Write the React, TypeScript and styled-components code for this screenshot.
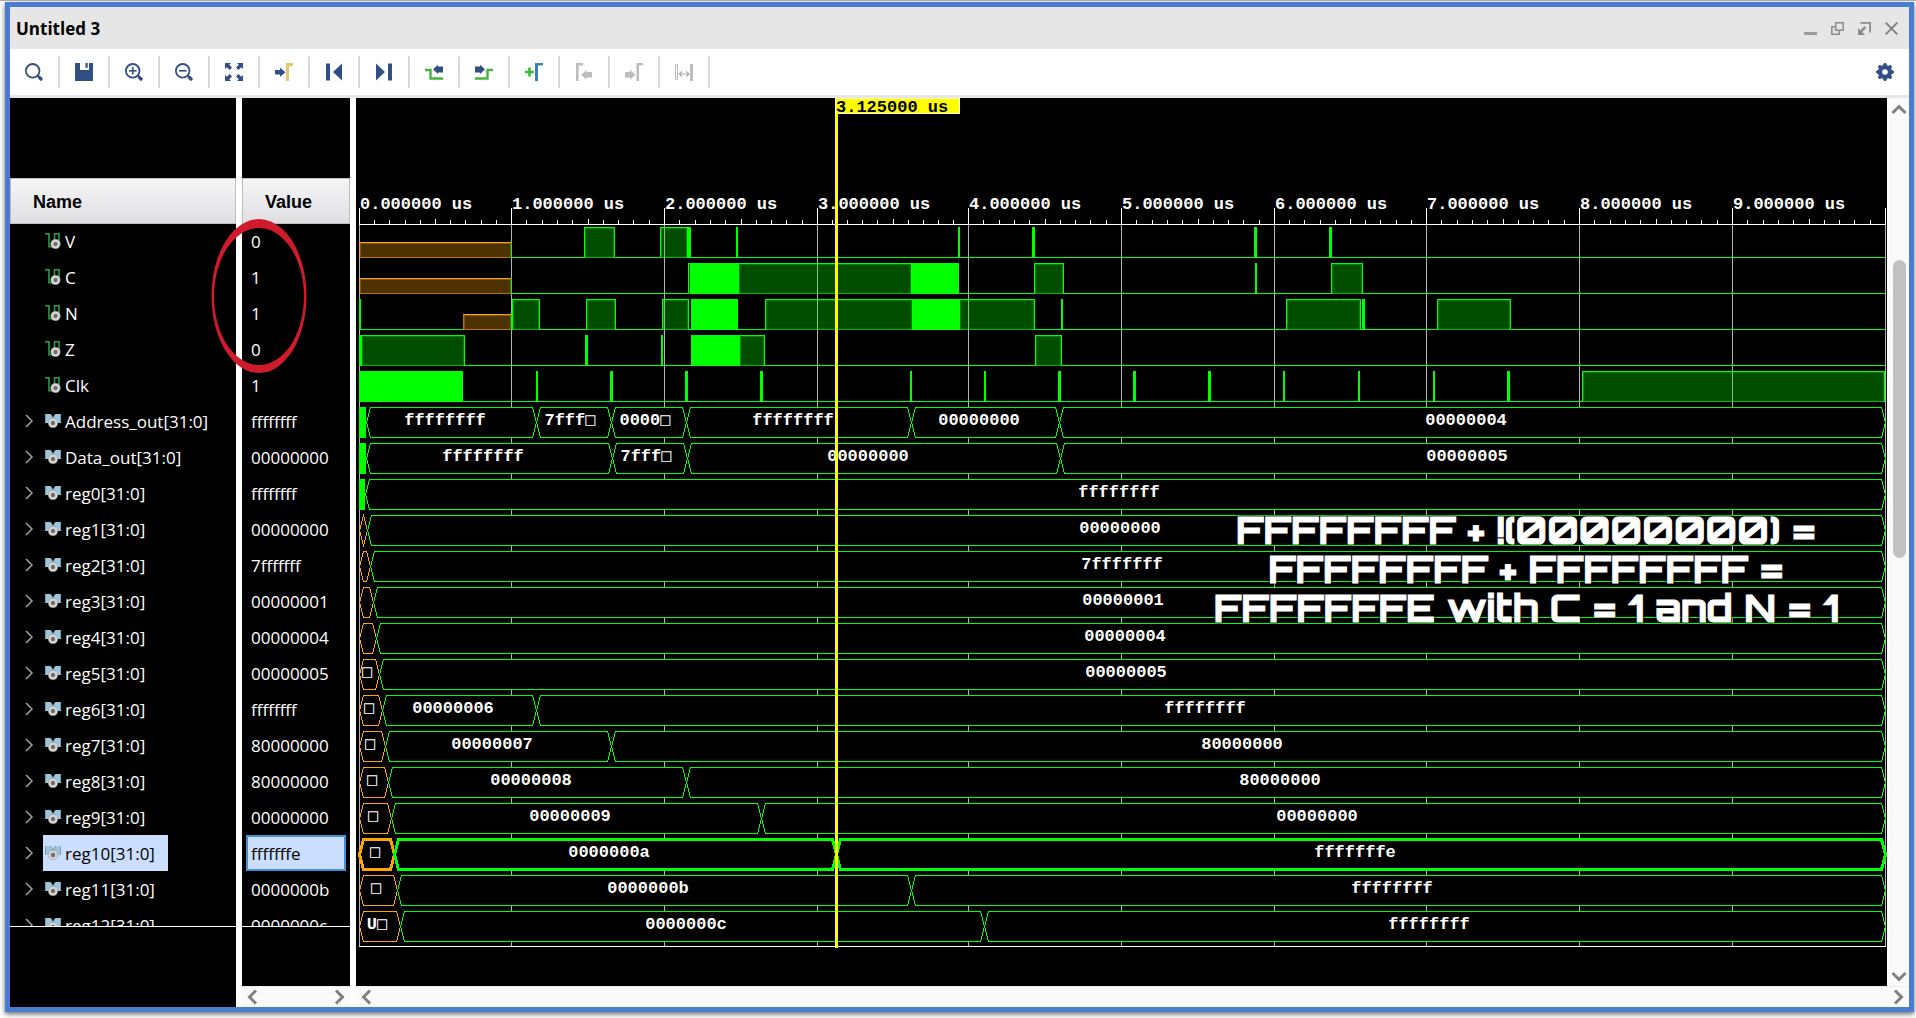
import React, { createContext, useContext, useLayoutEffect, useRef, useState } from "react";
import styled, { createGlobalStyle } from "styled-components";

const NAVY = "#324f85";
const GREEN = "#00ff00";
const ORANGE = "#ffa500";
const GRID = "#b4b4b4";
const UI_FONT = '"Segoe UI", "Open Sans", "Noto Sans", sans-serif';
const MONO_FONT = '"Courier New", "Liberation Mono", monospace';

const GlobalStyle = createGlobalStyle`
  * { box-sizing: border-box; }
  body { margin: 0; background: #fff; font-family: ${UI_FONT}; }
  button { font: inherit; border: 0; padding: 0; background: none; color: inherit; cursor: pointer; }
  svg { display: block; }
`;

/* ---------- window frame ---------- */

const Page = styled.div`
  height: 100vh;
  min-height: 640px;
  padding: 1px 2px 6px 5px;
  border-top: 1px solid #a9a9a9;
  overflow: hidden;
`;

const Frame = styled.main`
  height: 100%;
  display: flex;
  flex-direction: column;
  border: 5px solid #4a7dcf;
  box-shadow: 0 2px 5px rgba(0, 0, 0, 0.6);
  background: #fff;
`;

const TitleBar = styled.header`
  flex: none;
  height: 42px;
  display: flex;
  align-items: center;
  justify-content: space-between;
  padding: 0 4px 0 6px;
  background: #e6e6e6;
`;

const Title = styled.h1`
  margin: 0;
  font-size: 17px;
  font-weight: 700;
  color: #000;
`;

const WindowButtons = styled.div`
  display: flex;
`;

const WindowButton = styled.button`
  width: 27px;
  height: 27px;
  display: grid;
  place-items: center;
`;

const Toolbar = styled.div`
  flex: none;
  height: 49px;
  display: flex;
  align-items: center;
  border-bottom: 3px solid #e6e6e6;
  background: #fff;
`;

const ToolButton = styled.button`
  width: 50px;
  height: 32px;
  display: grid;
  place-items: center;
  border-right: 2px solid #d9d9d9;
`;

const SettingsButton = styled.button`
  width: 48px;
  height: 32px;
  margin-left: auto;
  display: grid;
  place-items: center;
`;

/* ---------- panes ---------- */

const Panes = styled.div`
  position: relative;
  flex: 1;
  min-height: 0;
  display: grid;
  grid-template-columns: 226px 108px minmax(0, 1fr);
  column-gap: 6px;
`;

const Pane = styled.section`
  display: flex;
  flex-direction: column;
  min-width: 0;
  min-height: 0;
  background: #000;
`;

const Spacer = styled.div`
  flex: none;
  height: 80px;
`;

const ColumnHeader = styled.h2`
  flex: none;
  height: 46px;
  margin: 0;
  padding-left: 22px;
  border: 1px solid #bdbdbd;
  background: linear-gradient(#f5f5f6, #dfdfe3);
  font: 700 18px/46px Arial, "Liberation Sans", sans-serif;
  color: #000;
`;

const List = styled.ul`
  flex: 1;
  min-height: 0;
  margin: -1px 0 0;
  padding: 0;
  overflow: hidden;
  list-style: none;
`;

const NameItem = styled.li`
  height: 36px;
  display: flex;
  align-items: center;
  padding-left: 13px;
`;

const Expander = styled.button<{ $hidden: boolean }>`
  width: 12px;
  height: 20px;
  margin-right: 8px;
  visibility: ${(p) => (p.$hidden ? "hidden" : "visible")};
`;

const NameLabel = styled.span<{ $selected: boolean }>`
  height: 36px;
  display: flex;
  align-items: center;
  gap: 4px;
  padding: 2px 13px 0 2px;
  font-size: 17px;
  line-height: 34px;
  white-space: nowrap;
  color: ${(p) => (p.$selected ? "#000" : "#fff")};
  background: ${(p) => (p.$selected ? "#ccdeff" : "transparent")};

  svg {
    margin-bottom: 2px;
  }
`;

const ValueItem = styled.li<{ $selected: boolean }>`
  height: 36px;
  margin: 0 4px;
  padding-left: 3px;
  border: 2px solid ${(p) => (p.$selected ? "#3f91d4" : "transparent")};
  font-size: 17px;
  line-height: 34px;
  color: ${(p) => (p.$selected ? "#000" : "#fff")};
  background: ${(p) => (p.$selected ? "#ccdeff" : "transparent")};
`;

const ListFooter = styled.div<{ $height: number }>`
  flex: none;
  height: ${(p) => p.$height}px;
  border-top: 1px solid #fff;
`;

const HScroll = styled.div`
  flex: none;
  height: 21px;
  display: flex;
  align-items: center;
  justify-content: space-between;
  padding: 0 2px;
  border-top: 1px solid #ececec;
  background: #fafafa;
`;

const WaveRow = styled.div`
  flex: 1;
  min-height: 0;
  display: flex;
`;

const Plot = styled.div`
  position: relative;
  flex: 1;
  min-width: 0;
  overflow: hidden;
`;

const VScroll = styled.div`
  flex: none;
  width: 22px;
  display: flex;
  flex-direction: column;
  align-items: center;
  padding: 3px 0 1px;
  border-left: 2px solid #fff;
  background: #fafafa;
`;

const Track = styled.div`
  flex: 1;
  display: grid;
  grid-template-rows: 141fr 298fr 409fr;
`;

const Thumb = styled.div`
  grid-row: 2;
  width: 13px;
  border-radius: 7px;
  background: #c1c1c1;
`;

const ScrollButton = styled.button`
  width: 18px;
  height: 18px;
  display: grid;
  place-items: center;
`;

/* ---------- overlays ---------- */

const CursorLine = styled.div`
  position: absolute;
  top: 0;
  width: 3px;
  height: 850px;
  background: #ff0;
`;

const CursorTag = styled.div`
  position: absolute;
  top: 0;
  width: 125px;
  height: 16px;
  border: 1px solid #ffffc0;
  background: #ff0;
  font: 700 17px/18px ${MONO_FONT};
  white-space: nowrap;
  color: #000;
`;

const Annotation = styled.p`
  position: absolute;
  top: 412px;
  margin: 0;
  transform: translateX(-50%);
  font: 700 38px/39px "Orbitron", "DejaVu Sans", sans-serif;
  text-align: center;
  white-space: nowrap;
  color: #fff;
  -webkit-text-stroke: 1px #fff;
  text-shadow: 0 0 2px #000, 0 0 3px #000, 0 0 3px #000;
`;

const RedCircle = styled.svg`
  position: absolute;
  left: 201px;
  top: 121px;
  pointer-events: none;
`;

/* ---------- icons ---------- */

const Icon = ({ size = 18, children }: { size?: number; children: React.ReactNode }) => (
  <svg width={size} height={size} viewBox={`0 0 ${size} ${size}`} fill="none" aria-hidden="true">
    {children}
  </svg>
);

const Lens = ({ sign }: { sign?: "plus" | "minus" }) => (
  <Icon>
    <circle cx="7.7" cy="7.8" r="6.8" stroke={NAVY} strokeWidth="1.8" />
    <path d="M12.5 12.5l1.5 1.5" stroke={NAVY} strokeWidth="2" />
    <path d="M14.6 14.6l1.4 1.4" stroke={NAVY} strokeWidth="3.4" strokeLinecap="round" />
    {sign && <path d="M4 7.8h7.6" stroke={NAVY} strokeWidth="1.6" />}
    {sign === "plus" && <path d="M7.8 4v7.6" stroke={NAVY} strokeWidth="1.6" />}
  </Icon>
);

const tools: { label: string; icon: React.ReactNode }[] = [
  { label: "Find", icon: <Lens /> },
  { label: "Save", icon: <Icon><path d="M0 0h5v7h9V0h4v18H0z" fill={NAVY} /><path d="M10.5 0h2.2v4.8h-2.2z" fill={NAVY} /></Icon> },
  { label: "Zoom in", icon: <Lens sign="plus" /> },
  { label: "Zoom out", icon: <Lens sign="minus" /> },
  {
    label: "Zoom fit",
    icon: (
      <Icon>
        <path d="M0 0h6L4.200 1.800 7 4.600 4.600 7 1.800 4.200 0 6zM18 0v6l-1.800-1.800L13.400 7 11 4.600l2.800-2.800L12 0zM0 18v-6l1.800 1.800L4.600 11 7 13.400l-2.800 2.800L6 18zM18 18h-6l1.800-1.800-2.800-2.800 2.400-2.400 2.800 2.800L18 12z" fill={NAVY} />
      </Icon>
    ),
  },
  { label: "Go to cursor", icon: <Icon><path d="M0 7h5V4.8L10.5 9.3 5 13.8V11.5H0z" fill={NAVY} /><path d="M11 0h7v3.2h-4V18h-3z" fill="#e3c964" /></Icon> },
  { label: "Go to start", icon: <Icon><path d="M1 .5h4v17H1zM17 .5v17L8 9z" fill={NAVY} /></Icon> },
  { label: "Go to end", icon: <Icon><path d="M13 .5h4v17h-4zM1 .5v17L10 9z" fill={NAVY} /></Icon> },
  { label: "Previous transition", icon: <Icon><path d="M0 7h5.5v8.500H18" stroke="#45b53c" strokeWidth="2.4" /><path d="M8 6.3L13 1.800V3.500h5v6h-5v1.400z" fill={NAVY} /></Icon> },
  { label: "Next transition", icon: <Icon><path d="M0 15.5h12.5V7H18" stroke="#45b53c" strokeWidth="2.4" /><path d="M10 6.3L5 1.800V3.500H0v6h5v1.400z" fill={NAVY} /></Icon> },
  { label: "Add marker", icon: <Icon><path d="M0 9h9M4.5 4.500v9" stroke="#45b53c" strokeWidth="2.6" /><path d="M10 0h8v2.500h-5V18h-3z" fill="#3a80b5" /></Icon> },
  { label: "Previous marker", icon: <Icon><path d="M1 0h7v2.500H3.600V18H1z" fill="#bdbdbd" /><path d="M6 11.700L11.500 7v2H17v5.500h-5.500v2z" fill="#bdbdbd" /></Icon> },
  { label: "Next marker", icon: <Icon><path d="M11.500 0H18v2.500h-4V18h-2.500z" fill="#bdbdbd" /><path d="M10.500 11.700L5 7v2H0v5.500h5v2z" fill="#bdbdbd" /></Icon> },
  {
    label: "Swap cursors",
    icon: (
      <Icon>
        <path d="M.5 1.500h2v15h-2z" stroke="#bdbdbd" />
        <path d="M15 1h3v17h-3z" fill="#bdbdbd" />
        <path d="M5 11h8M7 8.500L4.500 11 7 13.500M11.500 8.500L14 11l-2.500 2.500" stroke="#a9a9a9" strokeWidth="1.2" />
      </Icon>
    ),
  },
];

const Gear = () => (
  <Icon>
    <circle cx="9" cy="9" r="4.9" stroke={NAVY} strokeWidth="4.2" />
    {[0, 45, 90, 135].map((a) => (
      <path key={a} d="M7 1.800L8.200 0h1.600L11 1.800v1.500H7zM7 16.200L8.200 18h1.600l1.200-1.800V14.700H7z" fill={NAVY} transform={`rotate(${a} 9 9)`} />
    ))}
  </Icon>
);

const windowControls: { label: string; icon: React.ReactNode }[] = [
  { label: "Minimize", icon: <path d="M0 10h13v3H0z" fill="#9b9b9b" /> },
  { label: "Restore", icon: <path d="M4.7 8.300V.8h7.500v7.500H4.700zM4 4.700H.8v7.500h7.500V9" stroke="#8c8c8c" strokeWidth="1.5" /> },
  { label: "Pop out", icon: <path d="M2.5 0H13v10.500h-1.800V1.800H2.500zM0 13V6l2.300 2.300L6.500 4l1.800 1.800-4.200 4.200L7 13z" fill="#8c8c8c" /> },
  { label: "Close", icon: <path d="M.7.7l11.600 11.600M12.300.7L.7 12.300" stroke="#7f7f7f" strokeWidth="1.9" /> },
];

const chevrons = {
  up: "M2.500 12L9 5.500l6.500 6.500",
  down: "M2.500 6L9 12.500 15.500 6",
  left: "M12 2.500L5.500 9l6.500 6.500",
  right: "M6 2.500L12.500 9 6 15.500",
};

const ScrollArrow = ({ dir }: { dir: keyof typeof chevrons }) => (
  <ScrollButton type="button" aria-label={`Scroll ${dir}`}>
    <Icon>
      <path d={chevrons[dir]} stroke="#808080" strokeWidth="3" />
    </Icon>
  </ScrollButton>
);

const Badge = ({ x, y }: { x: number; y: number }) => (
  <>
    <circle cx={x} cy={y} r="4.8" fill="#d6d6d6" />
    <circle cx={x} cy={y} r="2.2" fill="#707070" />
    <circle cx={x} cy={y} r="4.8" stroke="#8a8a8a" strokeWidth=".5" />
  </>
);

const ScalarIcon = () => (
  <Icon size={16}>
    <path d="M0 .8h4v13h3M9.500 8V.8h4.500v8" stroke="#2f9a45" strokeWidth="1.6" />
    <Badge x={10.5} y={11} />
  </Icon>
);

const BusIcon = () => (
  <Icon size={16}>
    <path d="M0 1h5.500L8 5l2.500-4H16v9H0z" fill="#9cc6dc" />
    <path d="M.5 1.500v8M15.500 1.500v8M5.500 1L8 5l2.500-4" stroke="#7f9eac" />
    <Badge x={8} y={10} />
  </Icon>
);

/* ---------- waveform data ---------- */

/* Positions are in samples; the full ten microseconds hold SPAN of them. */
const SPAN = 1526;
const CURSOR = 477;
const MAJOR = [0, 152, 305, 458, 609, 762, 915, 1067, 1220, 1373, 1526];

type Level = "high" | "solid" | "unknown";
type Pulse = [number, number, Level];
type BusPart = { to: number; text?: string; kind?: "solid" | "unknown" };
type Signal = { name: string; value: string; pulses?: Pulse[]; bus?: BusPart[]; selected?: boolean };

const reg = (n: number, value: string, first: number, rest: BusPart[], selected = false): Signal => ({
  name: `reg${n}[31:0]`,
  value,
  selected,
  bus: [{ to: first, kind: "unknown", text: n < 5 ? undefined : n < 12 ? "□" : "U□" }, ...rest],
});

const signals: Signal[] = [
  {
    name: "V", value: "0",
    pulses: [
      [0, 153, "unknown"], [225, 256, "high"], [301, 329, "high"], [329, 332, "solid"], [377, 379, "solid"],
      [599, 601, "solid"], [673, 676, "solid"], [895, 898, "solid"], [970, 973, "solid"],
    ],
  },
  {
    name: "C", value: "1",
    pulses: [
      [0, 153, "unknown"], [329, 332, "high"], [332, 379, "solid"], [379, 553, "high"], [553, 600, "solid"],
      [675, 705, "high"], [896, 898, "solid"], [972, 1004, "high"],
    ],
  },
  {
    name: "N", value: "1",
    pulses: [
      [0, 2, "solid"], [104, 153, "unknown"], [153, 181, "high"], [227, 257, "high"], [303, 330, "high"],
      [332, 379, "solid"], [406, 554, "high"], [554, 600, "solid"], [600, 676, "high"], [702, 704, "solid"],
      [927, 1002, "high"], [1003, 1006, "solid"], [1078, 1152, "high"],
    ],
  },
  {
    name: "Z", value: "0",
    pulses: [
      [0, 2, "solid"], [2, 106, "high"], [226, 229, "solid"], [302, 304, "solid"], [332, 380, "solid"],
      [380, 406, "high"], [676, 703, "high"],
    ],
  },
  {
    name: "Clk", value: "1",
    pulses: [
      [0, 104, "solid"], [177, 179, "solid"], [251, 254, "solid"], [326, 329, "solid"], [401, 404, "solid"],
      [551, 553, "solid"], [625, 627, "solid"], [699, 702, "solid"], [774, 777, "solid"], [849, 852, "solid"],
      [924, 926, "solid"], [999, 1001, "solid"], [1074, 1076, "solid"], [1148, 1151, "solid"], [1223, 1526, "high"],
    ],
  },
  {
    name: "Address_out[31:0]", value: "ffffffff",
    bus: [
      { to: 7, kind: "solid" }, { to: 177, text: "ffffffff" }, { to: 252, text: "7fff□" }, { to: 327, text: "0000□" },
      { to: 552, text: "ffffffff" }, { to: 700, text: "00000000" }, { to: SPAN, text: "00000004" },
    ],
  },
  {
    name: "Data_out[31:0]", value: "00000000",
    bus: [
      { to: 7, kind: "solid" }, { to: 253, text: "ffffffff" }, { to: 328, text: "7fff□" },
      { to: 701, text: "00000000" }, { to: SPAN, text: "00000005" },
    ],
  },
  { name: "reg0[31:0]", value: "ffffffff", bus: [{ to: 6, kind: "solid" }, { to: SPAN, text: "ffffffff" }] },
  reg(1, "00000000", 8, [{ to: SPAN, text: "00000000" }]),
  reg(2, "7fffffff", 11, [{ to: SPAN, text: "7fffffff" }]),
  reg(3, "00000001", 14, [{ to: SPAN, text: "00000001" }]),
  reg(4, "00000004", 17, [{ to: SPAN, text: "00000004" }]),
  reg(5, "00000005", 20, [{ to: SPAN, text: "00000005" }]),
  reg(6, "ffffffff", 23, [{ to: 177, text: "00000006" }, { to: SPAN, text: "ffffffff" }]),
  reg(7, "80000000", 26, [{ to: 252, text: "00000007" }, { to: SPAN, text: "80000000" }]),
  reg(8, "80000000", 29, [{ to: 327, text: "00000008" }, { to: SPAN, text: "80000000" }]),
  reg(9, "00000000", 32, [{ to: 402, text: "00000009" }, { to: SPAN, text: "00000000" }]),
  reg(10, "fffffffe", 35, [{ to: 477, text: "0000000a" }, { to: SPAN, text: "fffffffe" }], true),
  reg(11, "0000000b", 38, [{ to: 552, text: "0000000b" }, { to: SPAN, text: "ffffffff" }]),
  reg(12, "0000000c", 41, [{ to: 625, text: "0000000c" }, { to: SPAN, text: "ffffffff" }]),
];

/* ---------- waveform drawing ---------- */

const ScaleContext = createContext<(u: number) => number>((u) => u);

const TOP = 2;
const BOTTOM = 32;
const MID = 17;

const Grid = ({ height }: { height: number }) => {
  const x = useContext(ScaleContext);
  return <>{MAJOR.map((u) => <rect key={u} x={x(u)} y="0" width="1" height={height} fill={GRID} />)}</>;
};

const PulseShape = ({ pulse: [from, to, level] }: { pulse: Pulse }) => {
  const x = useContext(ScaleContext);
  const a = x(from);
  const w = x(to) - a;
  if (level === "solid") return <rect x={a} y={TOP} width={w} height={BOTTOM - TOP + 1} fill={GREEN} />;
  const y = level === "high" ? TOP : MID;
  const color = level === "high" ? GREEN : ORANGE;
  const h = BOTTOM - y + 1;
  return (
    <>
      <rect x={a} y={y} width={w} height={h} fill={color} fillOpacity=".3" />
      <rect x={a + 1.5} y={y + 1.5} width={Math.max(w - 3, 0)} height={h - 2} fill="none" stroke={color} strokeOpacity=".3" />
      <rect x={a} y={y} width={w} height="1" fill={color} />
      <rect x={a} y={y} width="1" height={h} fill={color} fillOpacity={level === "high" ? 1 : 0.6} />
      <rect x={a} y={BOTTOM} width={w} height="1" fill={color} fillOpacity=".4" />
      <rect x={a + w - 1} y={y} width="1" height={h} fill={GREEN} />
    </>
  );
};

const DigitalTrace = ({ pulses }: { pulses: Pulse[] }) => {
  const x = useContext(ScaleContext);
  const lows: [number, number][] = [];
  let at = 0;
  pulses.forEach(([from, to]) => {
    if (from > at) lows.push([at, from]);
    at = to;
  });
  if (at < SPAN) lows.push([at, SPAN]);
  return (
    <>
      {lows.map(([a, b]) => <rect key={a} x={x(a)} y={BOTTOM} width={x(b) - x(a)} height="1" fill={GREEN} />)}
      {pulses.map((p) => <PulseShape key={p[0]} pulse={p} />)}
    </>
  );
};

const BusTrace = ({ parts, bold }: { parts: BusPart[]; bold?: boolean }) => {
  const x = useContext(ScaleContext);
  return (
    <>
      {parts.map((part, i) => {
        const a = x(i === 0 ? 0 : parts[i - 1].to) + 0.5;
        const b = x(part.to) + 0.5;
        if (part.kind === "solid") {
          return <rect key={part.to} x={a - 0.5} y={TOP} width={b - a} height={BOTTOM - TOP + 1} fill={GREEN} />;
        }
        const s = Math.min(4, (b - a) / 2);
        const [t, m, d] = [TOP + 0.5, MID + 0.5, BOTTOM + 0.5];
        const text = part.text ?? "";
        return (
          <g key={part.to}>
            <path
              d={`M${a} ${m}L${a + s} ${t}H${b - s}L${b} ${m}L${b - s} ${d}H${a + s}Z`}
              fill="#000"
              stroke={part.kind === "unknown" ? ORANGE : GREEN}
              strokeWidth={bold ? 3 : 1}
            />
            {text && (
              <text
                x={Math.floor((a + b) / 2 - text.length * 0.6 - 1)}
                y="20"
                textAnchor="middle"
                fill="#fff"
                fontFamily={MONO_FONT}
                fontWeight="700"
                fontSize="17"
              >
                {text.replace("□", "")}
                {text.endsWith("□") && (
                  <tspan fontFamily='"DejaVu Sans Mono", monospace' fontWeight="400">
                    □
                  </tspan>
                )}
              </text>
            )}
          </g>
        );
      })}
    </>
  );
};

const Trace = ({ width, signal }: { width: number; signal: Signal }) => (
  <svg width={width} height="36" shapeRendering="crispEdges" role="img" aria-label={signal.name}>
    <Grid height={36} />
    {signal.pulses && <DigitalTrace pulses={signal.pulses} />}
    {signal.bus && <BusTrace parts={signal.bus} bold={signal.selected} />}
  </svg>
);

const Ruler = ({ width }: { width: number }) => {
  const x = useContext(ScaleContext);
  const minor = MAJOR.slice(0, -1).flatMap((u, i) =>
    Array.from({ length: 9 }, (_, k) => ({ u: u + ((MAJOR[i + 1] - u) * (k + 1)) / 10, half: k === 4 }))
  );
  return (
    <svg width={width} height="127" shapeRendering="crispEdges">
      {MAJOR.map((u) => <rect key={u} x={x(u)} y="110" width="1" height="16" fill="#fff" />)}
      {minor.map(({ u, half }) => (
        <rect key={u} x={x(u)} y={half ? 121 : 122} width="1" height={half ? 5 : 4} fill="#fff" />
      ))}
      <rect x={x(0)} y="126" width={x(SPAN) - x(0) + 1} height="1" fill="#fff" />
      {MAJOR.slice(0, -1).map((u, i) => (
        <text key={u} x={x(u) + 1} y="111" fill="#fff" fontFamily={MONO_FONT} fontWeight="700" fontSize="17">
          {`${i}.000000 us`}
        </text>
      ))}
    </svg>
  );
};

const Waveform = () => {
  const ref = useRef<HTMLDivElement>(null);
  const [width, setWidth] = useState(1531);

  useLayoutEffect(() => {
    const el = ref.current;
    if (!el) return;
    const update = () => setWidth(el.clientWidth);
    update();
    const observer = new ResizeObserver(update);
    observer.observe(el);
    return () => observer.disconnect();
  }, []);

  const scale = (u: number) => 3 + Math.round((u * (width - 5)) / SPAN);

  return (
    <Plot ref={ref}>
      <ScaleContext.Provider value={scale}>
        <Ruler width={width} />
        {signals.map((s) => <Trace key={s.name} width={width} signal={s} />)}
        <svg width={width} height="2" shapeRendering="crispEdges">
          <Grid height={1} />
          <rect x={scale(0)} y="1" width={scale(SPAN) - scale(0) + 1} height="1" fill="#fff" />
        </svg>
      </ScaleContext.Provider>
      <CursorLine style={{ left: scale(CURSOR) - 1 }} />
      <CursorTag style={{ left: scale(CURSOR) - 1 }}>3.125000 us</CursorTag>
      <Annotation style={{ left: scale(1167) }}>
        FFFFFFFF + !(00000000) =<br />
        FFFFFFFF + FFFFFFFF =<br />
        FFFFFFFE with C = 1 and N = 1
      </Annotation>
    </Plot>
  );
};

/* ---------- app ---------- */

export default function App() {
  return (
    <>
      <GlobalStyle />
      <Page>
        <Frame>
          <TitleBar>
            <Title>Untitled 3</Title>
            <WindowButtons>
              {windowControls.map((c) => (
                <WindowButton key={c.label} type="button" aria-label={c.label}>
                  <Icon size={13}>{c.icon}</Icon>
                </WindowButton>
              ))}
            </WindowButtons>
          </TitleBar>
          <Toolbar role="toolbar">
            {tools.map((t) => (
              <ToolButton key={t.label} type="button" aria-label={t.label}>
                {t.icon}
              </ToolButton>
            ))}
            <SettingsButton type="button" aria-label="Settings">
              <Gear />
            </SettingsButton>
          </Toolbar>
          <Panes>
            <Pane>
              <Spacer />
              <ColumnHeader>Name</ColumnHeader>
              <List>
                {signals.map((s) => (
                  <NameItem key={s.name}>
                    <Expander type="button" aria-label={`Expand ${s.name}`} $hidden={!s.bus}>
                      <svg width="12" height="16" viewBox="0 0 12 16" fill="none">
                        <path d="M3 2l6 6-6 6" stroke="#a0a0a0" strokeWidth="1.5" />
                      </svg>
                    </Expander>
                    <NameLabel $selected={!!s.selected}>
                      {s.bus ? <BusIcon /> : <ScalarIcon />}
                      {s.name}
                    </NameLabel>
                  </NameItem>
                ))}
              </List>
              <ListFooter $height={81} />
            </Pane>
            <Pane>
              <Spacer />
              <ColumnHeader>Value</ColumnHeader>
              <List>
                {signals.map((s) => (
                  <ValueItem key={s.name} $selected={!!s.selected}>
                    {s.value}
                  </ValueItem>
                ))}
              </List>
              <ListFooter $height={60} />
              <HScroll>
                <ScrollArrow dir="left" />
                <ScrollArrow dir="right" />
              </HScroll>
            </Pane>
            <Pane>
              <WaveRow>
                <Waveform />
                <VScroll>
                  <ScrollArrow dir="up" />
                  <Track>
                    <Thumb />
                  </Track>
                  <ScrollArrow dir="down" />
                </VScroll>
              </WaveRow>
              <HScroll>
                <ScrollArrow dir="left" />
                <ScrollArrow dir="right" />
              </HScroll>
            </Pane>
            <RedCircle width="96" height="156" viewBox="0 0 96 156">
              <path
                d="M48 0a47.500 77 0 1 0 .01 0zM48 9a45 68.500 0 1 1-.01 0z"
                fill="#cf1b2c"
                fillRule="evenodd"
              />
            </RedCircle>
          </Panes>
        </Frame>
      </Page>
    </>
  );
}
